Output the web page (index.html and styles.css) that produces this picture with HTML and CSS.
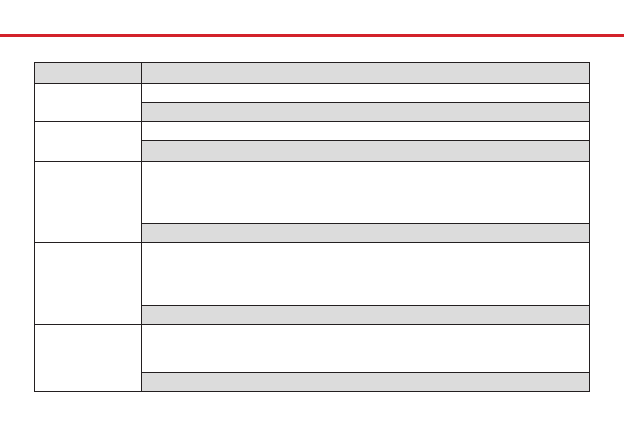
FILE: index.html
```html
<!DOCTYPE html>
<html>
<head>
	<meta http-equiv="Content-Type" content="text/html; charset=utf-8" />
	<title>Sheet</title>
	<link rel="stylesheet" href="styles.css">
</head>
<body>

<div class="rule"></div>

<div class="sheet">
	<div class="cell gray"></div>
	<div class="cell gray"></div>

	<div class="cell lab s2"></div>
	<div class="cell"></div>
	<div class="cell gray"></div>

	<div class="cell lab s2"></div>
	<div class="cell"></div>
	<div class="cell gray"></div>

	<div class="cell lab s2"></div>
	<div class="cell"></div>
	<div class="cell gray"></div>

	<div class="cell lab s2"></div>
	<div class="cell"></div>
	<div class="cell gray"></div>

	<div class="cell lab s2"></div>
	<div class="cell"></div>
	<div class="cell gray"></div>
</div>

</body>
</html>
```

FILE: styles.css
```css
body{
	margin:0px;
	padding:0px;
	background:#fff;
	font-family:"Liberation Sans", Arial, sans-serif;
}
.rule{
	margin-top:34px;
	height:3px;
	background:#d3222a;
}
.sheet{
	display:grid;
	grid-template-columns:106px 447px;
	grid-template-rows:20px 18px 18px 18px 20px 61px 18px 62px 18px 47px 18px;
	gap:1px;
	padding:1px;
	background:#231f20;
	width:max-content;
	margin:25px 0 0 34px;
}
.cell{
	background:#fff;
}
.gray{
	background:#dcdcdc;
}
.s2{
	grid-row:span 2;
}
```
